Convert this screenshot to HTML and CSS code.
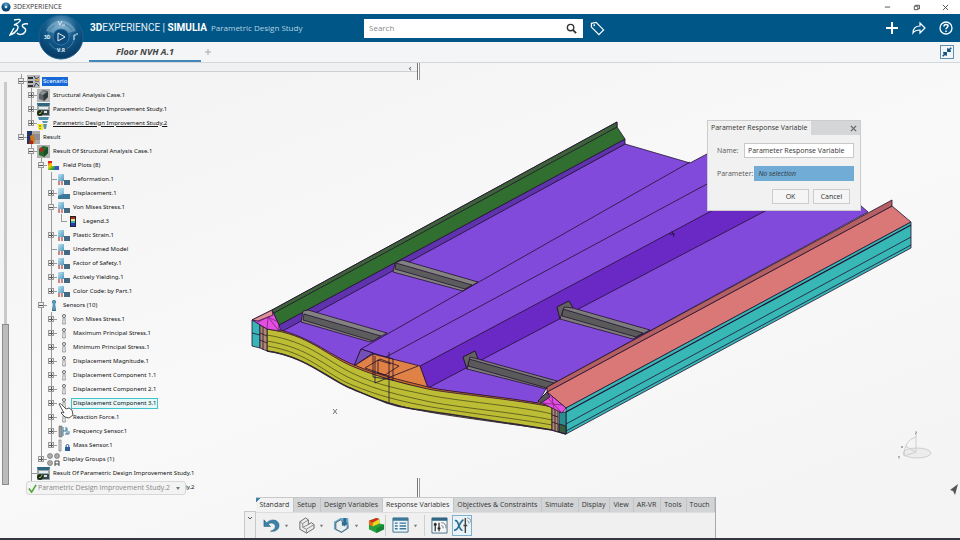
FILE: index.html
```
<!DOCTYPE html>
<html lang="en">

<head>
    <title>3DEXPERIENCE</title>
    <meta charset="UTF-8">
    <meta name="viewport" content="width=device-width, initial-scale=1">
    <link rel="stylesheet" href="styles.css">
</head>

<body>
    <!-- shared icons -->
    <svg class="defs" aria-hidden="true">
        <defs>
            <linearGradient id="sky" x1="0" y1="0" x2="1" y2="1">
                <stop offset="0" stop-color="#bfe3f2" />
                <stop offset="1" stop-color="#4e98bb" />
            </linearGradient>
            <linearGradient id="rainbow" x1="0" y1="0" x2="1" y2="1">
                <stop offset="0" stop-color="#e01818" />
                <stop offset="0.35" stop-color="#f4d012" />
                <stop offset="0.65" stop-color="#27a338" />
                <stop offset="1" stop-color="#2450c8" />
            </linearGradient>
            <radialGradient id="globe" cx="0.5" cy="0.25" r="0.8">
                <stop offset="0" stop-color="#6fa6c6" />
                <stop offset="0.45" stop-color="#125a8b" />
                <stop offset="1" stop-color="#04345c" />
            </radialGradient>
            <symbol id="i-scenario" viewBox="0 0 13 13">
                <rect width="13" height="13" fill="#b9b9b9" />
                <path d="M1 2h5v2H1zM1 6h5v2H1zM1 10h5v2H1z" fill="#333" />
                <path d="M7 1l2 3 3-2M8 6h4M7 12l2-4 3 3" stroke="#2b4a6b" fill="none" />
                <path d="M9 4h3v2H9z" fill="#e0a92e" />
            </symbol>
            <symbol id="i-case" viewBox="0 0 13 13">
                <rect width="13" height="13" fill="#b5b5b5" />
                <path d="M2 5l4-4 5 1v6l-4 4-5-2z" fill="#5d6569" />
                <path d="M6 6l5-3v5l-4 4z" fill="#34393c" />
                <path d="M3 5l3-3 3 1-3 3z" fill="#8b959b" />
            </symbol>
            <symbol id="i-study" viewBox="0 0 13 13">
                <rect width="13" height="13" fill="#9da6a9" />
                <path d="M0 0h13l-1 3H1z" fill="#2e6684" />
                <path d="M2 4h9v2H2z" fill="#e4ecef" />
                <path d="M5 7h7v5H5z" fill="#39474d" />
                <path d="M7 8h3v2H7z" fill="#d6dfe2" />
                <circle cx="3" cy="10" r="3" fill="#1e2a1c" />
                <path d="M2 10l1 1 2-3" stroke="#8cc63f" fill="none" />
            </symbol>
            <symbol id="i-warn" viewBox="0 0 13 13">
                <path d="M1 0h11l-1 3H2z" fill="#4b8cab" />
                <path d="M5 4h6l-1 2H6zM6 7h4l-1 5H7z" fill="#5c94ae" />
                <path d="M0 7h6v6H2z" fill="#f3ea1c" />
                <path d="M3 8v2M3 11v1" stroke="#555" />
            </symbol>
            <symbol id="i-result" viewBox="0 0 13 13">
                <rect width="13" height="13" fill="#aaa" />
                <path d="M0 0h5v13H0z" fill="#1e3566" />
                <path d="M6 3h7v6H6z" fill="#8f8f93" />
                <path d="M3 5l3-2 2 6-1 4H4z" fill="#d3761f" />
                <path d="M2 9l4 1v3H2z" fill="#a32b16" />
            </symbol>
            <symbol id="i-resultcase" viewBox="0 0 13 13">
                <rect width="13" height="13" fill="#b0b0b0" />
                <path d="M2 4l4-3 5 1v6l-4 4-5-2z" fill="#216b2c" />
                <path d="M2 4l3-2 2 3-3 3z" fill="#a92b1b" />
                <path d="M7 6l4-3v5l-4 4z" fill="#174f28" />
            </symbol>
            <symbol id="i-fields" viewBox="0 0 13 13">
                <path d="M1 2h4v5h7v4H1z" fill="url(#rainbow)" />
                <path d="M1 2h4v2H1z" fill="#e32619" />
                <path d="M8 7h4v4H8z" fill="#3b55d0" />
            </symbol>
            <symbol id="i-plot" viewBox="0 0 13 13">
                <path d="M1 1h6v7H1z" fill="url(#sky)" />
                <path d="M7 7h6v5H7z" fill="#426a84" />
                <path d="M1 8h5v4H1z" fill="#f2e8e8" />
                <path d="M2 8v4M5 8v4" stroke="#a02828" />
            </symbol>
            <symbol id="i-disp" viewBox="0 0 13 13">
                <path d="M1 1h6v6h6v5H1z" fill="url(#sky)" />
                <path d="M1 9l5-2h7v5H1z" fill="#3b7796" />
            </symbol>
            <symbol id="i-legend" viewBox="0 0 13 13">
                <path d="M3 1h6v11H3z" fill="#222" />
                <path d="M4 2h4v2H4z" fill="#b02a1c" />
                <path d="M4 4h4v2H4z" fill="#e8e0a0" />
                <path d="M4 6h4v2H4z" fill="#39b3a8" />
                <path d="M4 8h4v3H4z" fill="#1d3cc0" />
            </symbol>
            <symbol id="i-sensors" viewBox="0 0 13 13">
                <circle cx="7" cy="3" r="2" fill="#2f7596" />
                <path d="M6 4h2l1 8H5z" fill="#2a6a8b" />
                <path d="M7 2v9" stroke="#8cc6df" />
            </symbol>
            <symbol id="i-sensor" viewBox="0 0 13 13">
                <circle cx="7" cy="3" r="1.6" fill="#ddd" stroke="#777" />
                <path d="M6 5h2l.4 6h-2.800z" fill="#eee" stroke="#888" stroke-width=".8" />
            </symbol>
            <symbol id="i-freq" viewBox="0 0 13 13">
                <path d="M2 1h3v11H2z" fill="#9a9a9a" stroke="#666" stroke-width=".6" />
                <path d="M6 2v9M6 6h3v-4M8 9h4V6M10 3v6" stroke="#36799d" fill="none" />
            </symbol>
            <symbol id="i-mass" viewBox="0 0 13 13">
                <path d="M2 1h2v11H2z" fill="#ddd" stroke="#777" stroke-width=".7" />
                <path d="M8 8h5v4H8z" fill="#2d5f96" />
                <circle cx="10.500" cy="7" r="1.500" fill="none" stroke="#2d5f96" />
            </symbol>
            <symbol id="i-groups" viewBox="0 0 13 13">
                <circle cx="3" cy="3" r="2.500" fill="#aaa" stroke="#666" stroke-width=".6" />
                <circle cx="10" cy="3" r="2.500" fill="#aaa" stroke="#666" stroke-width=".6" />
                <circle cx="3" cy="10" r="2.500" fill="#aaa" stroke="#666" stroke-width=".6" />
                <path d="M8 13V8h4v5M8 11h4" fill="none" stroke="#444" />
            </symbol>
        </defs>
    </svg>

    <div class="titlebar">
        <svg class="app-icon" viewBox="0 0 11 11"><circle cx="5.500" cy="5.500" r="5" fill="url(#globe)" /><circle cx="5.500" cy="5.500" r="1.500" fill="#cfe4f0" /></svg>
        <span>3DEXPERIENCE</span>
        <div class="window-buttons">
            <button aria-label="Minimize"><svg viewBox="0 0 8 8"><path d="M1 3.500h6" stroke="#444" /></svg></button>
            <button aria-label="Restore"><svg viewBox="0 0 8 8"><path d="M1.500 2.500h4v4h-4zM2.500 2.500v-1h5v4h-2" stroke="#444" fill="none" /></svg></button>
            <button aria-label="Close"><svg viewBox="0 0 8 8"><path d="M1 1l6 6M7 1L1 7" stroke="#444" /></svg></button>
        </div>
    </div>

    <header class="topbar">
        <svg class="ds-logo" viewBox="0 0 20 20">
            <path d="M5 2c4-1 7-1 6 1-1 2-4 3-6 4 4-1 5 2 3 5-2 3-4 4-7 5l4-7" fill="none" stroke="#fff" stroke-width="1.400" />
            <path d="M19 6c-4-1-7 1-5 3s4 2 2 5c-2 3-6 3-8 1" fill="none" stroke="#fff" stroke-width="1.500" />
        </svg>
        <button class="compass" aria-label="Compass">
            <svg viewBox="0 0 46 46">
                <circle cx="23" cy="23" r="22" fill="url(#globe)" stroke="#1d5f8d" />
                <path d="M8 17a16 16 0 0 1 30 0l-8 2a8 8 0 0 0-14 0z" fill="#9dc2d8" opacity=".45" />
                <circle cx="23" cy="23" r="13" fill="none" stroke="#3e80aa" stroke-dasharray="14 6" />
                <circle cx="23" cy="23" r="8" fill="#0c4b7b" stroke="#2a75a5" />
                <path d="M20 19l7 4-7 4z" fill="none" stroke="#e6f1f8" />
                <path d="M20 7l2 4 2-4M24 11h3" fill="none" stroke="#dcebf4" />
                <path d="M36 21v5M36 21h2M39 19v2" stroke="#dcebf4" fill="none" />
                <text x="6" y="25" font-size="5">3D</text>
                <text x="19" y="38" font-size="5">V.R</text>
            </svg>
        </button>
        <h1 class="brand"><b>3D</b>EXPERIENCE | <b>SIMULIA</b></h1>
        <span class="app-name">Parametric Design Study</span>
        <form class="search" role="search">
            <input type="search" placeholder="Search" aria-label="Search">
            <button type="button" aria-label="Run search"><svg viewBox="0 0 12 12"><circle cx="5" cy="5" r="3.500" fill="none" stroke="#333" stroke-width="1.500" /><path d="M7.500 7.500L11 11" stroke="#333" stroke-width="2" /></svg></button>
        </form>
        <button class="tag" aria-label="Tags"><svg viewBox="0 0 16 16"><path d="M1.500 2.500l5-1 8 8-5 5-8-8z" fill="none" stroke="#fff" stroke-width="1.300" /><circle cx="4.500" cy="4.500" r="1" fill="#fff" /></svg></button>
        <div class="top-actions">
            <button aria-label="Add"><svg viewBox="0 0 14 14"><path d="M7 1v12M1 7h12" stroke="#fff" stroke-width="2" /></svg></button>
            <button aria-label="Share"><svg viewBox="0 0 14 14"><path d="M1 12c0-5 3-7 7-7V2l5 5-5 5V9c-3 0-5 0-7 3z" fill="none" stroke="#fff" stroke-width="1.200" /></svg></button>
            <button aria-label="Help"><svg viewBox="0 0 14 14"><circle cx="7" cy="7" r="6" fill="none" stroke="#fff" stroke-width="1.300" /><path d="M5 5.500c0-3 4-2.500 4-.5 0 1.500-2 1.500-2 3.300M7 9.500v1.500" fill="none" stroke="#fff" stroke-width="1.500" /></svg></button>
        </div>
    </header>

    <nav class="doc-tabs">
        <a class="doc-tab" href="#floor">Floor NVH A.1</a>
        <button class="new-tab" aria-label="New tab"><svg viewBox="0 0 8 8"><path d="M4 1v6M1 4h6" stroke="#aaa" /></svg></button>
        <button class="collapse" aria-label="Exit full view"><svg viewBox="0 0 14 14"><path d="M12 2L8.500 5.500M8 2.500V6h3.500M2 12l3.500-3.500M2.500 8H6v3.500" fill="none" stroke="#10517f" stroke-width="1.800" /></svg></button>
    </nav>

    <main class="workspace">
        <svg class="scene" viewBox="0 63 960 477" role="img" aria-label="Floor model">
            <g stroke="#23102f" stroke-width=".8" stroke-linejoin="round">
                <path d="M279 331L625 144 690 163 720 147 860 205 868 212 547 387 538 403 473 394 428 388 354 366 317 347 290 335z" fill="#824adb" />
                <path d="M279 325L625 139V144L281 332z" fill="#5f33ae" />
                <path d="M272 310L617 122V127L625 139 279 325z" fill="#306f2f" />
                <path d="M272 310L617 122V127L272 314z" fill="#3e633b" />
                <!-- left cross members -->
                <path d="M395 263L402 260 478 282 463 291 393 272z" fill="#828282" />
                <path d="M396 263L472 285 465 289 395 269z" fill="#5c5c5c" />
                <path d="M303 311L308 310 387 333 370 342 301 322z" fill="#828282" />
                <path d="M304 314L381 336 373 341 303 320z" fill="#5c5c5c" />
                <!-- tunnel -->
                <path d="M354 366L361 349 690 162M361 349L373 353M386 357L707 184" fill="none" />
                <path d="M361 349L373 353 354 366z" fill="#7450b8" />
                <path d="M420 366L715 209H769L428 388z" fill="#6a29c5" />
                <path d="M669 234h6M672 231l2 6" fill="none" />
                <!-- right cross members -->
                <path d="M463 357L475 351 478 359 557 381 546 389 467 369z" fill="#7c7c7c" />
                <path d="M469 359L554 383 547 388 468 366z" fill="#5a5a5a" />
                <path d="M463 357L475 351 478 359 470 357 467 369z" fill="#626262" />
                <path d="M557 307L569 301 573 308 650 330 633 339 560 319z" fill="#7c7c7c" />
                <path d="M563 309L643 333 636 337 562 316z" fill="#5a5a5a" />
                <path d="M557 307L569 301 573 308 564 307 560 319z" fill="#626262" />
                <!-- right rail -->
                <path d="M547 392L892 206 911 222 566 408z" fill="#da7777" />
                <path d="M547 387L892 200V206L547 392z" fill="#b45f61" />
                <path d="M566 408L911 222V248L566 434z" fill="#38b7b7" />
                <path d="M566 412L911 225" fill="none" stroke-width="1.200" />
                <path d="M566 424L911 237M566 431L911 245" fill="none" />
                <!-- front beam -->
                <path d="M354 366L373 354 420 366 428 388 390 381z" fill="#e08145" />
                <path d="M267 327C310 335 325 353 354 365S410 382 428 387 520 398 552 406L552 410 428 390 354 370z" fill="#c96b2a" />
                <path d="M267 329C310 335 325 355 354 367S410 385 428 389 520 400 552 407V430C520 425 445 416 413 409S365 394 350 388 305 356 267 351z" fill="#bcbd35" />
                <path d="M267 335C310 342 325 360 352 373S400 389 428 395 520 406 552 414M267 341C310 348 325 367 352 379S400 395 426 401 520 413 552 420M267 346C310 353 325 374 352 385S400 401 426 406 520 419 552 425" fill="none" stroke="#4d4f1a" />
                <path d="M267 351C305 356 328 379 350 388S390 406 413 409 520 425 552 430L566 434" fill="none" stroke="#302735" stroke-width="1.600" />
                <path d="M252 320L260 323V348L252 346z" fill="#38b5b8" />
                <path d="M260 325L267 329V351L260 348z" fill="#ae8a72" />
                <path d="M263 326v24M260 333l7 3M260 340l7 3M252 333l8 2" fill="none" />
                <path d="M252 320L272 310 279 325V331L267 329z" fill="#e34fe0" />
                <path d="M252 320L272 310 273 315 258 321z" fill="#df8f97" />
                <path d="M256 323L268 317 279 331M267 329L268 317 278 322" fill="none" stroke="#7a1f80" />
                <path d="M552 407L558 410V432L552 430z" fill="#ae8a72" />
                <path d="M559 412L566 412V434L559 432z" fill="#2b8f90" />
                <path d="M559 424l7 2v8l-7-2z" fill="#375f3e" />
                <path d="M555 409v22M552 415l6 2M552 422l6 2" fill="none" />
                <path d="M538 401L547 392 566 408 562 413z" fill="#e34fe0" />
                <path d="M538 401L547 392 550 397 541 403z" fill="#555" />
                <path d="M547 397L562 413M543 403l19 2M552 397l2 12" fill="none" stroke="#7a1f80" />
                <path d="M373 353L393 359V380L373 377zM389 352V402M375 356V383L418 366M365 368L380 359 399 366 385 375zM378 360V373L389 376M378 360l13 4" fill="none" />
            </g>
            <path d="M333 409l4 5M337 409l-4 5" stroke="#555" stroke-width=".8" />
            <!-- axis triad -->
            <g fill="none" stroke="#cfcfcf">
                <ellipse cx="917" cy="453" rx="14" ry="5" fill="#ececec" />
                <path d="M916 435V452L904 456M916 452L905 446M904 456Q904 440 916 437" />
            </g>
            <path d="M915 432h2l-2 2h2M901 446l2 2M903 446l-2 2M898 456l1 1 1-1M899 457v2" stroke="#777" stroke-width=".6" fill="none" />
            <path d="M950 490l8-6-3 11-2-4z" fill="#555" />
        </svg>

        <aside class="tree-panel">
            <div class="panel-head"><button aria-label="Hide tree">‹</button></div>
            <div class="tree-body">
                <div class="scrollbar"><div class="thumb"></div></div>
                <ul class="tree">
                    <li>
                        <div class="row"><button class="toggle open" aria-label="Collapse"></button><svg><use href="#i-scenario" /></svg><span class="picked">Scenario</span></div>
                        <ul>
                            <li><div class="row"><button class="toggle" aria-label="Expand"></button><svg><use href="#i-case" /></svg><span>Structural Analysis Case.1</span></div></li>
                            <li><div class="row"><button class="toggle" aria-label="Expand"></button><svg><use href="#i-study" /></svg><span>Parametric Design Improvement Study.1</span></div></li>
                            <li><div class="row"><button class="toggle" aria-label="Expand"></button><svg><use href="#i-warn" /></svg><span class="current">Parametric Design Improvement Study.2</span></div></li>
                        </ul>
                    </li>
                    <li>
                        <div class="row"><button class="toggle open" aria-label="Collapse"></button><svg><use href="#i-result" /></svg><span>Result</span></div>
                        <ul>
                            <li>
                                <div class="row"><button class="toggle open" aria-label="Collapse"></button><svg><use href="#i-resultcase" /></svg><span>Result Of Structural Analysis Case.1</span></div>
                                <ul>
                                    <li>
                                        <div class="row"><button class="toggle open" aria-label="Collapse"></button><svg><use href="#i-fields" /></svg><span>Field Plots (8)</span></div>
                                        <ul>
                                            <li><div class="row leaf"><svg><use href="#i-plot" /></svg><span>Deformation.1</span></div></li>
                                            <li><div class="row"><button class="toggle" aria-label="Expand"></button><svg><use href="#i-disp" /></svg><span>Displacement.1</span></div></li>
                                            <li>
                                                <div class="row"><button class="toggle open" aria-label="Collapse"></button><svg><use href="#i-plot" /></svg><span>Von Mises Stress.1</span></div>
                                                <ul>
                                                    <li><div class="row leaf"><svg><use href="#i-legend" /></svg><span>Legend.3</span></div></li>
                                                </ul>
                                            </li>
                                            <li><div class="row"><button class="toggle" aria-label="Expand"></button><svg><use href="#i-plot" /></svg><span>Plastic Strain.1</span></div></li>
                                            <li><div class="row leaf"><svg><use href="#i-plot" /></svg><span>Undeformed Model</span></div></li>
                                            <li><div class="row"><button class="toggle" aria-label="Expand"></button><svg><use href="#i-plot" /></svg><span>Factor of Safety.1</span></div></li>
                                            <li><div class="row"><button class="toggle" aria-label="Expand"></button><svg><use href="#i-plot" /></svg><span>Actively Yielding.1</span></div></li>
                                            <li><div class="row"><button class="toggle" aria-label="Expand"></button><svg><use href="#i-plot" /></svg><span>Color Code: by Part.1</span></div></li>
                                        </ul>
                                    </li>
                                    <li>
                                        <div class="row"><button class="toggle open" aria-label="Collapse"></button><svg><use href="#i-sensors" /></svg><span>Sensors (10)</span></div>
                                        <ul>
                                            <li><div class="row"><button class="toggle" aria-label="Expand"></button><svg><use href="#i-sensor" /></svg><span>Von Mises Stress.1</span></div></li>
                                            <li><div class="row"><button class="toggle" aria-label="Expand"></button><svg><use href="#i-sensor" /></svg><span>Maximum Principal Stress.1</span></div></li>
                                            <li><div class="row"><button class="toggle" aria-label="Expand"></button><svg><use href="#i-sensor" /></svg><span>Minimum Principal Stress.1</span></div></li>
                                            <li><div class="row"><button class="toggle" aria-label="Expand"></button><svg><use href="#i-sensor" /></svg><span>Displacement Magnitude.1</span></div></li>
                                            <li><div class="row"><button class="toggle" aria-label="Expand"></button><svg><use href="#i-sensor" /></svg><span>Displacement Component 1.1</span></div></li>
                                            <li><div class="row"><button class="toggle" aria-label="Expand"></button><svg><use href="#i-sensor" /></svg><span>Displacement Component 2.1</span></div></li>
                                            <li><div class="row raised"><button class="toggle" aria-label="Expand"></button><svg><use href="#i-sensor" /></svg><span class="hovered">Displacement Component 3.1</span>
                                                <svg class="hand" viewBox="0 0 16 16"><path d="M1 1c1-1 2 0 3 1l4 4 3-1 3 2 1 5-4 3-4-1-4-4 1-1 2 1z" fill="#fff" stroke="#444" stroke-width=".9" /></svg></div></li>
                                            <li><div class="row"><button class="toggle" aria-label="Expand"></button><svg><use href="#i-sensor" /></svg><span>Reaction Force.1</span></div></li>
                                            <li><div class="row"><button class="toggle" aria-label="Expand"></button><svg><use href="#i-freq" /></svg><span>Frequency Sensor.1</span></div></li>
                                            <li><div class="row"><button class="toggle" aria-label="Expand"></button><svg><use href="#i-mass" /></svg><span>Mass Sensor.1</span></div></li>
                                        </ul>
                                    </li>
                                    <li><div class="row"><button class="toggle" aria-label="Expand"></button><svg><use href="#i-groups" /></svg><span>Display Groups (1)</span></div></li>
                                </ul>
                            </li>
                            <li><div class="row leaf"><svg><use href="#i-study" /></svg><span>Result Of Parametric Design Improvement Study.1</span></div></li>
                            <li><div class="row leaf"><svg><use href="#i-study" /></svg><span>Result Of Parametric Design Improvement Study.2</span></div></li>
                        </ul>
                    </li>
                </ul>
                <div class="active-study">
                    <svg class="check" viewBox="0 0 10 10"><path d="M1 5l3 4 5-8" fill="none" stroke="#55a63a" stroke-width="1.800" /></svg>
                    <select aria-label="Active study">
                        <option>Parametric Design Improvement Study.2</option>
                    </select>
                    <svg class="caret" viewBox="0 0 6 6"><path d="M1 2h4L3 5z" fill="#777" /></svg>
                </div>
            </div>
        </aside>

        <form class="dialog">
            <div class="dialog-title">
                <h2>Parameter Response Variable</h2>
                <button type="button" aria-label="Close"><svg viewBox="0 0 8 8"><path d="M1 1l6 6M7 1L1 7" stroke="#666" stroke-width="1.500" /></svg></button>
            </div>
            <div class="field">
                <label for="name">Name:</label>
                <input id="name" type="text" value="Parameter Response Variable">
            </div>
            <div class="field">
                <label for="parameter">Parameter:</label>
                <input id="parameter" class="selection" type="text" value="No selection" readonly>
            </div>
            <div class="dialog-buttons">
                <button type="button">OK</button>
                <button type="button">Cancel</button>
            </div>
        </form>

        <section class="actionbar">
            <button class="fold" aria-label="Hide action bar"><svg viewBox="0 0 8 8"><path d="M2 3l2 2 2-2" fill="none" stroke="#555" /></svg></button>
            <div class="sections">
                <div class="tabs">
                    <button class="on first">Standard</button>
                    <button>Setup</button>
                    <button>Design Variables</button>
                    <button class="on">Response Variables</button>
                    <button>Objectives &amp; Constraints</button>
                    <button>Simulate</button>
                    <button>Display</button>
                    <button>View</button>
                    <button>AR-VR</button>
                    <button>Tools</button>
                    <button>Touch</button>
                </div>
                <div class="tools">
                    <button class="tool" aria-label="Undo"><svg viewBox="0 0 18 18"><path d="M1 3v7h7L5.500 7.500C9 5 13 7 13 10c0 3-2 4-5 5 5 1 9-2 9-6 0-6-8-8-13-3z" fill="#3a83a8" stroke="#23617f" stroke-width=".6" /></svg></button>
                    <button class="drop" aria-label="Undo list"><svg viewBox="0 0 6 6"><path d="M1 2h4L3 5z" fill="#777" /></svg></button>
                    <button class="tool" aria-label="Geometry"><svg viewBox="0 0 18 18"><path d="M2 5l6-4 3 2v5l3-2 3 2v4l-8 5-7-4z" fill="#ececec" stroke="#666" /><path d="M2 5l3 2 6-4M5 7v4l6-3M5 11l4 2 8-5M9 13v4" fill="none" stroke="#888" /></svg></button>
                    <button class="drop" aria-label="Geometry list"><svg viewBox="0 0 6 6"><path d="M1 2h4L3 5z" fill="#777" /></svg></button>
                    <button class="tool" aria-label="Update"><svg viewBox="0 0 18 18"><path d="M1 5l7-4h8l1 11-8 5-8-4z" fill="#6aa9c8" /><path d="M3 6l5-3 2 2v4l3-2 2 2v3l-6 4-6-3z" fill="#e9eef0" stroke="#4a6473" /><path d="M11 1h3v5h2l-4 4-3-4h2z" fill="#2b6d91" /></svg></button>
                    <button class="drop" aria-label="Update list"><svg viewBox="0 0 6 6"><path d="M1 2h4L3 5z" fill="#777" /></svg></button>
                    <button class="tool" aria-label="Results"><svg viewBox="0 0 18 18"><path d="M1 4l8-3 3 1v5l5 1v5l-8 4-8-4z" fill="#26a03a" /><path d="M1 4l8-3 3 1-7 4z" fill="#d92a1c" /><path d="M1 4l4 2v4L1 8z" fill="#ee6a1a" /><path d="M5 6l7-4v5l-7 3z" fill="#f2d31d" /><path d="M9 12l8-4v5l-8 4z" fill="#178338" /></svg></button>
                    <span class="sep"></span>
                    <button class="tool" aria-label="Table"><svg viewBox="0 0 18 18"><path d="M1 1h16v15H1z" fill="#eef5f8" stroke="#3b6f8c" /><path d="M1 1h16v3H1z" fill="#3b7898" /><path d="M3 6.500h3M3 9.500h3M3 12.500h3M8 6.500h7M8 9.500h7M8 12.500h7" stroke="#3b7898" stroke-width="1.500" /></svg></button>
                    <button class="drop" aria-label="Table list"><svg viewBox="0 0 6 6"><path d="M1 2h4L3 5z" fill="#777" /></svg></button>
                    <span class="sep"></span>
                    <button class="tool" aria-label="Sensor response"><svg viewBox="0 0 18 18"><path d="M1 1h16v16H1z" fill="#f4f6f7" stroke="#456f86" /><path d="M1 1h16v3H1z" fill="#2f6685" /><path d="M4.500 6v9M8.500 6v9" stroke="#444" stroke-width="1.500" /><path d="M3 8h3M7 12h3" stroke="#222" stroke-width="2" /><path d="M11 9q2 0 2 3M11 6q5 0 5 6" fill="none" stroke="#777" /></svg></button>
                    <button class="tool pressed" aria-label="Parameter response"><svg viewBox="0 0 18 18"><path d="M1 4c4-2 4 11 8 10M10 3C6 4 5 15 0 14" fill="none" stroke="#2d6e92" stroke-width="1.800" /><path d="M12 1v16M10 9h4" stroke="#444" stroke-width="1.500" /><path d="M14 4q2 0 2 3M14 1q4 0 4 5" fill="none" stroke="#889" /></svg></button>
                </div>
            </div>
        </section>
    </main>
</body>

</html>
```
FILE: styles.css
```
* {
    box-sizing: border-box;
}

body {
    margin: 0;
    height: 100vh;
    display: flex;
    flex-direction: column;
    overflow: hidden;
    font-family: "Open Sans", "Noto Sans", sans-serif;
    font-size: 7px;
    line-height: 14px;
    color: #333;
    background: #f5f5f5;
}

button,
input,
select {
    font: inherit;
    color: inherit;
    margin: 0;
    padding: 0;
    border: none;
    background: none;
}

svg {
    display: block;
}

h1,
h2 {
    margin: 0;
    font-weight: normal;
}

ul {
    list-style: none;
    margin: 0;
    padding: 0;
}

.defs {
    position: absolute;
    width: 0;
    height: 0;
}

/* title bar */
.titlebar {
    display: flex;
    align-items: center;
    gap: 2px;
    height: 14px;
    padding: 0 11px 0 1px;
    background: #fff;
    font-size: 7px;
    flex: none;
}

.app-icon {
    width: 10px;
    height: 10px;
}

.window-buttons {
    display: flex;
    gap: 22px;
    margin-left: auto;
}

.window-buttons svg {
    width: 7px;
    height: 7px;
}

/* blue bar */
.topbar {
    position: relative;
    display: flex;
    align-items: center;
    height: 28px;
    padding: 0 7px 0 9px;
    background: #005686;
    color: #fff;
    flex: none;
}

.ds-logo {
    width: 20px;
    height: 20px;
    margin-right: 61px;
}

.compass {
    position: absolute;
    left: 38px;
    top: 0;
    width: 46px;
    height: 46px;
    z-index: 2;
}

.compass text {
    fill: #e6f1f8;
    font-weight: bold;
}

.brand {
    width: 121px;
    font-family: Roboto, sans-serif;
    font-size: 10px;
    color: #e4eef5;
    white-space: nowrap;
}

.brand b {
    color: #fff;
}

.app-name {
    width: 153px;
    font-size: 8px;
    color: #b5d3e4;
    white-space: nowrap;
}

.search {
    display: flex;
    align-items: center;
    flex: 0 1 219px;
    height: 19px;
    margin-right: 7px;
    background: #fff;
    color: #444;
}

.search input {
    flex: 1;
    min-width: 0;
    padding-left: 5px;
    font-size: 8px;
    outline: none;
}

.search input::placeholder {
    color: #888;
}

.search button {
    width: 21px;
    padding-left: 4px;
}

.search svg {
    width: 11px;
    height: 11px;
}

.tag svg {
    width: 15px;
    height: 15px;
}

.top-actions {
    display: flex;
    gap: 13px;
    margin-left: auto;
}

.top-actions svg {
    width: 14px;
    height: 14px;
}

/* document tabs */
.doc-tabs {
    display: flex;
    align-items: center;
    height: 21px;
    padding: 0 6px 0 89px;
    background: #f3f5f7;
    border-bottom: 1px solid #d3d7da;
    flex: none;
}

.doc-tab {
    width: 112px;
    height: 19px;
    line-height: 17px;
    text-align: center;
    font-size: 9px;
    font-weight: bold;
    font-style: italic;
    color: #444;
    text-decoration: none;
    border-bottom: 2px solid #4288b8;
}

.new-tab {
    margin-left: 3px;
}

.new-tab svg {
    width: 8px;
    height: 8px;
}

.collapse {
    margin-left: auto;
    border: 1px solid #5e8fb0;
}

.collapse svg {
    width: 12px;
    height: 12px;
}

/* 3D area */
.workspace {
    position: relative;
    flex: 1;
    min-height: 0;
    display: flex;
    flex-direction: column;
    justify-content: space-between;
    background: linear-gradient(160deg, #f3f3f3, #f9f9f9 50%, #f3f3f3);
    border-bottom: 2px solid #34373b;
}

.scene {
    position: absolute;
    left: 0;
    top: 0;
    width: 100%;
}

/* tree */
.tree-panel {
    position: relative;
    width: 420px;
    flex: 1;
    min-height: 0;
    display: flex;
    flex-direction: column;
    background:
        linear-gradient(90deg, #777 1px, #fff 1px 2px, #999 2px) 417px 0 / 3px 17px no-repeat,
        linear-gradient(90deg, #777 1px, #fff 1px 2px, #999 2px) 417px 100% / 3px 19px no-repeat;
}

.panel-head {
    width: 417px;
    height: 9px;
    display: flex;
    justify-content: flex-end;
    background: #f0f1f2;
    border-bottom: 1px solid #cfcfcf;
    flex: none;
}

.panel-head button {
    width: 14px;
    line-height: 7px;
    font-size: 9px;
}

.tree-body {
    position: relative;
    flex: 1;
    min-height: 0;
    display: flex;
    overflow: hidden;
}

.scrollbar {
    width: 7px;
    margin: 10px 12px 12px 2px;
    background: linear-gradient(#c9c9c9, #c9c9c9) center / 3px 100% no-repeat;
    display: flex;
    align-items: flex-end;
}

.thumb {
    width: 7px;
    height: 40%;
    background: #bcbcbc;
    border: 1px solid #8c8c8c;
}

.tree {
    padding-top: 2px;
    font-family: "Noto Sans", sans-serif;
    font-size: 6px;
    color: #111;
}

.tree ul {
    padding-left: 10px;
}

.tree li {
    position: relative;
}

.tree li::before {
    content: "";
    position: absolute;
    left: 0;
    top: 0;
    height: 100%;
    border-left: 1px solid #999;
}

.tree li:last-child::before {
    height: 7px;
}

.row {
    position: relative;
    display: flex;
    align-items: center;
    height: 14px;
    white-space: nowrap;
    background: linear-gradient(#999, #999) 0 7px / 6px 1px no-repeat;
}

.row.raised {
    z-index: 1;
}

.row svg {
    width: 13px;
    height: 13px;
    margin: 0 2px 0 3px;
    flex: none;
}

.row.leaf svg {
    margin-left: 6px;
}

.row span {
    line-height: 9px;
    padding: 0 1px;
}

.toggle {
    width: 6px;
    height: 6px;
    margin-left: -3px;
    border: 1px solid #999;
    background: linear-gradient(#555, #555) center / 4px 1px no-repeat,
        linear-gradient(#555, #555) center / 1px 4px no-repeat, #eee;
    flex: none;
}

.toggle.open {
    background: linear-gradient(#555, #555) center / 4px 1px no-repeat, #eee;
}

.row .picked {
    background: #1769d8;
    color: #fff;
}

.row .current {
    text-decoration: underline;
}

.row .hovered {
    outline: 1px solid #3fc4cb;
    background: #e6f7f8;
}

.row .hand {
    position: absolute;
    left: 4px;
    top: 7px;
    width: 16px;
    height: 16px;
}

.active-study {
    position: absolute;
    left: 26px;
    bottom: 2px;
    z-index: 2;
    display: flex;
    align-items: center;
    width: 160px;
    height: 14px;
    padding: 0 4px 0 1px;
    background: #f3f3f3;
    border: 1px solid #d8d8d8;
    border-radius: 3px;
}

.active-study .check {
    width: 9px;
    height: 9px;
}

.active-study select {
    flex: 1;
    min-width: 0;
    margin-left: 1px;
    appearance: none;
    color: #888;
}

.active-study .caret {
    width: 6px;
    height: 6px;
}

/* dialog */
.dialog {
    position: absolute;
    right: 99px;
    top: 57px;
    width: 154px;
    padding-bottom: 6px;
    background: #f1f1f1;
    border: 1px solid #ccc;
}

.dialog-title {
    display: flex;
    justify-content: space-between;
    height: 14px;
    margin-bottom: 8px;
    background: #d4d6d8;
}

.dialog-title h2 {
    font-size: 7px;
    line-height: 13px;
    padding: 0 4px 0 3px;
    background: #f1f1f1;
}

.dialog-title button {
    padding-right: 3px;
}

.dialog-title svg {
    width: 7px;
    height: 7px;
}

.field {
    display: flex;
    align-items: center;
    margin: 0 6px 8px 9px;
    color: #555;
}

.field label {
    min-width: 27px;
    padding-right: 1px;
}

.field input {
    flex: 1;
    min-width: 0;
    height: 15px;
    padding: 0 3px;
    background: #fff;
    border: 1px solid #c8c8c8;
    color: #333;
}

.field .selection {
    background: #70acd6;
    border-color: #70acd6;
    font-style: italic;
}

.dialog-buttons {
    display: flex;
    justify-content: flex-end;
    gap: 4px;
    padding-right: 10px;
}

.dialog-buttons button {
    width: 37px;
    height: 15px;
    line-height: 13px;
    background: #f5f5f5;
    border: 1px solid #ccc;
}

/* action bar */
.actionbar {
    position: relative;
    display: flex;
    align-items: flex-end;
    margin: 0 auto;
    flex: none;
}

.fold {
    width: 12px;
    height: 27px;
    display: flex;
    justify-content: center;
    padding-top: 2px;
    background: #f0f0f0;
    border: 1px solid #c8c8c8;
    border-bottom: none;
}

.fold svg {
    width: 8px;
    height: 8px;
}

.sections {
    background: #f0f0f0;
    border-right: 1px solid #aaa;
}

.tabs {
    display: flex;
    height: 15px;
}

.tabs button {
    padding: 0 4px 0 3px;
    line-height: 14px;
    background: #d2d4d5;
    border-right: 1px solid #c2c4c5;
    border-top: 1px solid #c8c8c8;
    white-space: nowrap;
}

.tabs .on {
    background: #f2f2f2;
}

.tabs .first {
    background: linear-gradient(135deg, #3d83ad 3px, #f2f2f2 3px);
}

.tools {
    display: flex;
    align-items: center;
    height: 26px;
    padding-left: 5px;
    border-top: 1px solid #ddd;
}

.tool {
    width: 20px;
    height: 21px;
    display: flex;
    align-items: center;
    justify-content: center;
}

.tool svg {
    width: 17px;
    height: 17px;
}

.tool.pressed {
    margin-left: 3px;
    border: 1px solid #7db0ce;
    background: #e9f2f7;
}

.drop {
    width: 11px;
    margin-right: 4px;
    display: flex;
    justify-content: center;
}

.drop svg {
    width: 5px;
    height: 5px;
}

.sep {
    width: 1px;
    height: 21px;
    margin: 0 4px 0 -1px;
    background: #d0d0d0;
}
```
